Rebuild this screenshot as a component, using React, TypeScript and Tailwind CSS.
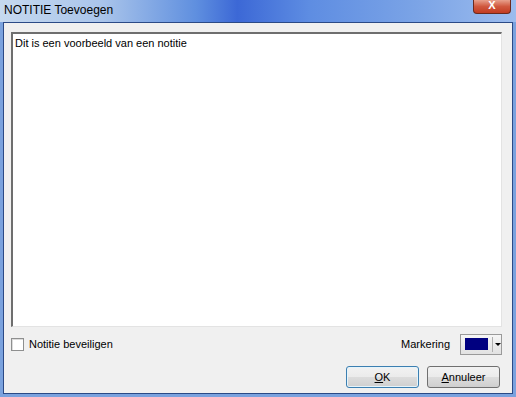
import React from "react";

export default function App() {
  return (
    <div
      className="w-[516px] h-[397px] flex flex-col bg-[#7aa2de] overflow-hidden"
      style={{ fontFamily: '"Liberation Sans", Arial, sans-serif' }}
    >
      {/* Title bar */}
      <div className="h-[22px] flex items-start justify-between bg-[linear-gradient(90deg,#c6d9ef_0%,#a9c4ea_20%,#5f8fdf_38%,#3c68d6_46%,#5e8de2_60%,#7aa3e6_80%,#9cbcee_100%)]">
        <span className="pl-[4px] pt-[3px] text-[12px] leading-[14px] text-black">NOTITIE Toevoegen</span>
        <div className="mr-[5px] w-[38px] h-[14px] rounded-b-[4px] border border-t-0 border-[#6b2a1e] bg-[linear-gradient(180deg,#e8a08c_0%,#d0583e_50%,#c23b22_100%)] flex items-center justify-center">
          <span className="text-white text-[11px] font-bold leading-none -mt-[2px]">X</span>
        </div>
      </div>
      {/* Content */}
      <div className="flex-1 mx-[3px] mb-[3px] border border-[#2b4a86] bg-[#f0f0f0] flex flex-col px-[7px] pt-[9px]">
        <div className="h-[295px] mr-[3px] bg-white border-t-2 border-l-2 border-[#6e6e6e] border-r border-b border-r-[#e3e3e3] border-b-[#e3e3e3] px-[2px] pt-[3px] text-[11px] leading-[13px] text-black">
          Dit is een voorbeeld van een notitie
        </div>
        <div className="flex items-center justify-between mt-[7px] h-[20px]">
          <label className="flex items-center gap-[5px]">
            <span className="w-[13px] h-[13px] bg-white border border-[#8e8f8f] shadow-[inset_1px_1px_0_#dcdcdc]" />
            <span className="text-[11px] text-black">Notitie beveiligen</span>
          </label>
          <div className="flex items-center mr-[3px]">
            <span className="text-[11px] text-black mr-[10px]">Markering</span>
            <div className="w-[42px] h-[21px] border border-[#9a9a9a] bg-[linear-gradient(180deg,#f6f6f6,#e2e2e2)] flex items-center">
              <span className="ml-[4px] w-[24px] h-[12px] bg-[#000080]" />
              <span className="ml-[4px] w-[1px] h-[15px] bg-[#b0b0b0]" />
              <span className="ml-[2px] w-0 h-0 border-l-[3px] border-r-[3px] border-t-[3px] border-l-transparent border-r-transparent border-t-black" />
            </div>
          </div>
        </div>
        <div className="flex justify-end gap-[8px] mt-[12px] mr-[5px]">
          <button className="w-[73px] h-[22px] rounded-[3px] border border-[#3c7fb1] bg-[linear-gradient(180deg,#f2f2f2_0%,#ebebeb_50%,#dddddd_50%,#cfcfcf_100%)] text-[11px] text-black shadow-[inset_0_0_0_1px_#e5f4fb]">
            <span className="underline">O</span>K
          </button>
          <button className="w-[73px] h-[22px] rounded-[3px] border border-[#707070] bg-[linear-gradient(180deg,#f2f2f2_0%,#ebebeb_50%,#dddddd_50%,#cfcfcf_100%)] text-[11px] text-black">
            <span className="underline">A</span>nnuleer
          </button>
        </div>
      </div>
    </div>
  );
}
